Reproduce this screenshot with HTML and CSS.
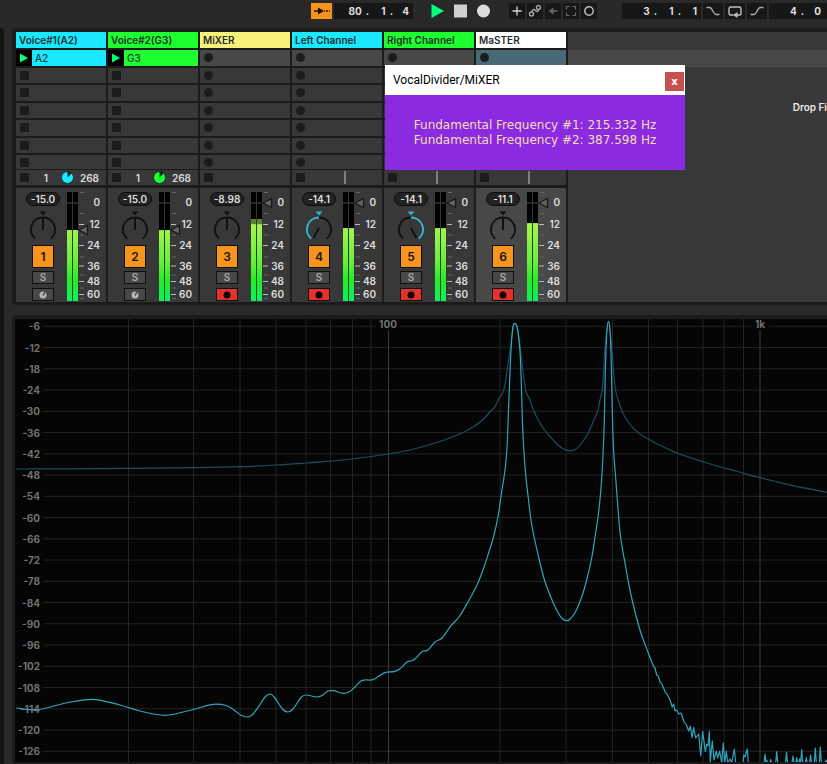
FILE: index.html
```html
<!DOCTYPE html>
<html lang="en">
<head>
<meta charset="utf-8">
<title>VocalDivider</title>
<link rel="stylesheet" href="styles.css">
</head>
<body>
<header class="toolbar">
  <button class="tool follow" aria-label="Follow"><svg width="21" height="16" viewBox="0 0 21 16"><path d="M3 8H8M13 8h6" stroke="#1a1208" stroke-width="1.500" fill="none"/><path d="M14.500 7v2M17.500 7v2" stroke="#f7941e"/><path d="M7 4.500L13 8 7 11.500z" fill="#1a1208"/></svg></button>
  <output class="position" aria-label="Arrangement position"><span><b>80</b><i>.</i></span><span><b>1</b><i>.</i></span><b>4</b></output>
  <div class="transport">
    <button aria-label="Play"><svg width="13" height="16" viewBox="0 0 13 16"><path d="M0.500 1v14L13 8z" fill="#00ff7b"/></svg></button>
    <button aria-label="Stop"><svg width="13" height="16" viewBox="0 0 13 16"><path d="M0 1.500h13v13H0z" fill="#d0d0d0"/></svg></button>
    <button aria-label="Record"><svg width="13" height="16" viewBox="0 0 13 16"><circle cx="6.500" cy="8" r="6.500" fill="#dcdcdc"/></svg></button>
  </div>
  <div class="tools">
    <button class="tool" aria-label="Overdub"><svg width="16" height="16" viewBox="0 0 16 16"><path d="M8 3.500v9M3.500 8h9" stroke="#d6d6d6" stroke-width="1.300"/></svg></button>
    <button class="tool" aria-label="Automation arm"><svg width="16" height="16" viewBox="0 0 16 16"><g fill="none" stroke="#a6a6a6" stroke-width="1.400"><circle cx="4.500" cy="11" r="2"/><circle cx="11.500" cy="4.500" r="2"/><path d="M5 9c0-3 2-3 3.500-1.500S11.500 9 11.500 6.500"/></g></svg></button>
    <button class="tool" aria-label="Re-enable automation"><svg width="16" height="16" viewBox="0 0 16 16"><path d="M7 8h5.500" stroke="#626262" stroke-width="1.600"/><path d="M8.500 4.300v7.400L3.500 8z" fill="#626262"/></svg></button>
    <button class="tool" aria-label="Capture"><svg width="16" height="16" viewBox="0 0 16 16"><path d="M3.500 6.500v-3h3M9.500 3.500h3v3M12.500 9.500v3h-3M6.500 12.500h-3v-3" fill="none" stroke="#666" stroke-width="1.200"/></svg></button>
    <button class="tool" aria-label="Session record"><svg width="16" height="16" viewBox="0 0 16 16"><circle cx="8" cy="8" r="4.200" fill="none" stroke="#bcbcbc" stroke-width="1.500"/></svg></button>
  </div>
  <output class="position" aria-label="Loop start"><span><b>3</b><i>.</i></span><span><b>1</b><i>.</i></span><b>1</b></output>
  <button class="tool wide" aria-label="Punch in"><svg width="20" height="16" viewBox="0 0 20 16"><path d="M3.500 4.500H7c2 0 3.500 7 6 7h3.500" fill="none" stroke="#ababab" stroke-width="1.400"/></svg></button>
  <button class="tool wide" aria-label="Loop"><svg width="20" height="16" viewBox="0 0 20 16"><path d="M8.500 12H5.500Q4 12 4 10.500V6Q4 4 6 4h8q2 0 2 2v4.500Q16 12 14.500 12H10" fill="none" stroke="#c0c0c0" stroke-width="1.400"/><path d="M12.500 9v6L8 12z" fill="#c0c0c0"/></svg></button>
  <button class="tool wide" aria-label="Punch out"><svg width="20" height="16" viewBox="0 0 20 16"><path d="M3.500 11.500H7c2.500 0 4-7 6-7h3.500" fill="none" stroke="#ababab" stroke-width="1.400"/></svg></button>
  <output class="position open" aria-label="Loop length"><span><b>4</b><i>.</i></span><span><b>0</b></span></output>
</header>
<div class="workspace">
  <div class="edge"></div>
  <main class="panels">
    <section class="panel session" aria-label="Session">
      <div class="tracks" id="tracks"></div>
      <div class="drop"><div class="drop-slot"></div><p>Drop Fi</p></div>
      <div class="dialog" role="dialog" aria-label="VocalDivider/MiXER">
        <div class="dialog-bar"><span>VocalDivider/MiXER</span><button aria-label="Close">x</button></div>
        <div class="dialog-body"><p>Fundamental Frequency #1: 215.332 Hz</p><p>Fundamental Frequency #2: 387.598 Hz</p></div>
      </div>
    </section>
    <section class="panel spectrum" aria-label="Spectrum">
      <svg id="plot" viewBox="15 319 812 443" preserveAspectRatio="xMinYMin slice"></svg>
    </section>
  </main>
</div>
<script src="app.js"></script>
</body>
</html>
```
FILE: styles.css
```css
* { box-sizing: border-box; }
body {
  margin: 0;
  min-height: 100vh;
  display: flex;
  flex-direction: column;
  overflow: hidden;
  background: #292929;
  color: #dedede;
  font: 600 10px/12px Inter, "Liberation Sans", sans-serif;
}
button { border: 0; padding: 0; margin: 0; font: inherit; color: inherit; background: none; }
p { margin: 0; }
svg { display: block; }

.toolbar {
  display: flex;
  align-items: flex-start;
  height: 28px;
  padding: 3px 0 0 311px;
  overflow: hidden;
}
.toolbar > * { flex: none; }
.tool { height: 16px; background: #171717; }
.tool.follow { background: #f7941e; margin-right: 2px; }
.tool.wide { margin-left: 2px; }
.position {
  display: flex;
  justify-content: flex-end;
  width: 79px;
  height: 16px;
  padding-right: 4px;
  background: #171717;
  font: 700 10px/16px Inter, "Liberation Sans", sans-serif;
}
.position b { font-weight: 700; }
.position i { font-style: normal; }
.position span { display: flex; justify-content: flex-end; gap: 4px; width: 24px; }
.position > b { width: 16px; text-align: right; }
.toolbar > .position.open { flex: 1; justify-content: flex-start; padding: 0 0 0 11px; }
.position.open span:last-child { width: 17px; }
.transport { display: flex; gap: 10px; margin: 0 19px 0 18px; }
.tools { display: flex; gap: 2px; margin-right: 25px; }
.wide + .position { margin-left: 2px; }

.workspace { flex: 1; display: flex; min-width: 0; }
.edge { width: 4px; background: #151515; border-radius: 0 4px 0 0; }
.panels { flex: 1; min-width: 0; display: flex; flex-direction: column; gap: 10px; padding-left: 8px; }
.panel { background: #1b1b1b; border-radius: 4px 0 0 4px; }

.session { position: relative; display: flex; gap: 2px; padding: 4px 0 3px 4px; }
.tracks { display: grid; grid-template-columns: repeat(6, 90px); gap: 2px; }
.track-name {
  height: 16px;
  padding-left: 3px;
  line-height: 16px;
  color: #1f2d2d;
  white-space: nowrap;
}
.slots {
  display: grid;
  grid-template-rows: repeat(6, 1fr) 14px;
  gap: 2px;
  height: 119px;
  margin: 2px 0 1px;
}
.slot { display: flex; align-items: center; background: #383838; padding-left: 4px; }
.slot.lit { background: #484848; }
.slot.scene { background: #486a76; }
.slot.clip { padding: 0; font-weight: 500; color: #1f3d3d; }
.cyan, .slot.cyan { background: #19e8ff; }
.green, .slot.green { background: #1dff2f; }
.yellow { background: #f8f17a; }
.white { background: #fff; }
.clip-play { display: grid; place-items: center; width: 16px; height: 100%; background: #000; }
.clip-name { padding-left: 3px; }
.stop-row {
  display: flex;
  align-items: center;
  height: 15px;
  padding: 0 7px 0 4px;
  background: #383838;
}
.stop-row .count { width: 20px; text-align: right; margin-right: 13px; }
.stop-row .pie { margin-right: auto; }
.stop-row .cue { width: 2px; height: 13px; margin-left: 40px; background: #909090; }
.stop-row button { width: 8px; }

.strip {
  display: flex;
  height: 114px;
  margin-top: 3px;
  padding-top: 4px;
  background: #383838;
}
.strip.master { background: #484848; }
.controls {
  display: flex;
  flex-direction: column;
  align-items: center;
  width: 34px;
  margin: 0 7px 0 10px;
}
.level {
  width: 34px;
  height: 14px;
  line-height: 12px;
  border: 1px solid #0c0c0c;
  border-radius: 7px;
  background: #222;
  text-align: center;
}
.pan { margin: 4px 0; }
.activator, .solo, .arm { width: 22px; border: 1px solid #101010; }
.activator { height: 23px; background: #f7941e; color: #151515; font-size: 12px; }
.solo { height: 13px; margin: 3px 0 4px; background: #484848; color: #aaa; line-height: 11px; }
.arm { display: grid; place-items: center; height: 13px; background: #484848; }
.arm.armed { background: #e6302b; }
.meter {
  display: grid;
  grid-template-columns: 5px 5px;
  gap: 1px;
  width: 11px;
  height: 109px;
  background: #2d3a24;
}
.channel {
  display: flex;
  flex-direction: column;
  justify-content: flex-end;
  background: linear-gradient(#000 10px, #262626 10px 12px, #000 12px);
}
.hold { background: #5d8230; }
.fill {
  height: calc(var(--level) * 1px);
  background: linear-gradient(to top, #0bf065 0, #20ee25 20px, #6ff03c 42px, #adf653 82px);
  border-top: 1px solid #9ae04c;
}
.scale text { fill: #dedede; text-anchor: end; }

.drop { flex: 1; background: #383838; padding-top: 18px; overflow: hidden; }
.drop-slot { height: 17px; margin-bottom: 34px; background: #484848; }
.drop p { text-align: right; white-space: nowrap; color: #e8e8e8; }

.dialog { position: absolute; left: 373px; top: 37px; width: 300px; }
.dialog-bar {
  display: flex;
  align-items: center;
  justify-content: space-between;
  height: 30px;
  padding: 0 1px 0 8px;
  background: #fff;
  color: #000;
  font: 400 12px/16px Roboto, "Open Sans", sans-serif;
}
.dialog-bar button {
  width: 19px;
  height: 19px;
  margin-top: 3px;
  background: #c75050;
  color: #fff;
  font: 700 10px/16px "DejaVu Sans", sans-serif;
}
.dialog-body {
  height: 75px;
  padding-top: 23px;
  background: #8a2be2;
  color: #f5deb3;
  font: 400 12px/15px "DejaVu Sans", sans-serif;
  text-align: center;
  white-space: nowrap;
}

.spectrum { flex: 1; padding: 4px 0 2px 3px; }
.spectrum svg { width: 100%; height: auto; background: #050505; border-radius: 3px 0 0 0; }
.spectrum text { fill: #707070; font-size: 10px; font-weight: 700; text-anchor: end; }
.spectrum .freq { text-anchor: middle; }
.grid { stroke: #232323; fill: none; }
.grid-major { stroke: #3c3c3c; fill: none; }
.trace { fill: none; stroke: #2fa5bd; stroke-width: 1.2; stroke-linejoin: round; }
.trace-avg { fill: none; stroke: #1c4f5b; stroke-width: 1.2; }
```
FILE: app.js
```js
const tracks = [
  { name: 'Voice#1(A2)', color: 'cyan', clip: 'A2', pie: '#19e8ff', vol: '-15.0', pan: 0, fader: 42, level: 71 },
  { name: 'Voice#2(G3)', color: 'green', clip: 'G3', pie: '#1dff2f', vol: '-15.0', pan: 0, fader: 42, level: 71 },
  { name: 'MiXER', color: 'yellow', vol: '-8.98', pan: 0, fader: 15, level: 77, hold: 5, armed: true },
  { name: 'Left Channel', color: 'cyan', cue: true, vol: '-14.1', pan: -1, fader: 15, level: 73, armed: true },
  { name: 'Right Channel', color: 'green', cue: true, vol: '-14.1', pan: 1, fader: 15, level: 73, armed: true },
  { name: 'MaSTER', color: 'white', cue: true, vol: '-11.1', pan: 0, fader: 15, level: 78, armed: true, master: true }
];
const square = '<svg width="9" height="9"><path d="M0 0h9v9H0z" fill="#1c1c1c"/></svg>';
const dot = '<svg width="9" height="9"><circle cx="4.500" cy="4.500" r="4.500" fill="#1c1c1c"/></svg>';

function slots(t) {
  let out = '';
  for (let i = 0; i < 7; i++) {
    if (i === 0 && t.clip) {
      out += `<div class="slot clip ${t.color}"><button class="clip-play" aria-label="Launch ${t.clip}"><svg width="8" height="10"><path d="M0 .5v9L8 5z" fill="#00ff7b"/></svg></button><span class="clip-name">${t.clip}</span></div>`;
    } else {
      const kind = i === 0 ? (t.master ? ' scene' : ' lit') : '';
      out += `<button class="slot${kind}" aria-label="Slot ${i + 1}">${t.clip ? square : dot}</button>`;
    }
  }
  return out;
}

function stopRow(t) {
  let out = `<button aria-label="Stop clips">${square}</button>`;
  if (t.clip) {
    out += `<span class="count">1</span><svg class="pie" width="13" height="13"><circle cx="6.500" cy="6.500" r="6" fill="${t.pie}" stroke="#15343a" stroke-width="1"/><path d="M6.500 6.500V0A6.500 6.500 0 0 1 11 2z" fill="#0d2426"/></svg><span>268</span>`;
  } else if (t.cue) {
    out += '<span class="cue-cell"><svg width="84" height="13"><path d="M41 0v13" stroke="#999" stroke-width="1.500"/></svg></span>';
  }
  return out;
}

function pan(t) {
  const hot = '#35b4cf', ink = '#111';
  const left = 'M7.200 28.700A12 12 0 0 1 15 7.500';
  const right = 'M15 7.500A12 12 0 0 1 22.800 28.700';
  const needle = t.pan < 0 ? 'M15 18L9.500 28' : t.pan > 0 ? 'M15 18L20.500 28' : 'M15 7v13';
  return `<svg class="pan" width="30" height="31" viewBox="0 0 30 31" role="img" aria-label="Pan">
    <path d="M11.500 1.500h7L15 5.500z" fill="${t.pan ? hot : ink}"/>
    <g fill="none" stroke-width="2"><path d="${left}" stroke="${t.pan < 0 ? hot : ink}"/><path d="${right}" stroke="${t.pan > 0 ? hot : ink}"/><path d="${needle}" stroke="${ink}"/></g></svg>`;
}

function scale(t) {
  const labels = [[0, 10.5], [12, 32.5], [24, 53.5], [36, 74], [48, 89.5], [60, 102.5]];
  const minor = [0.5, 21.5, 43, 65, 83, 96, 106.5];
  let out = '<svg class="scale" width="24" height="110" viewBox="0 0 24 110">';
  minor.forEach(y => { out += `<path d="M2 ${y}h4" stroke="#666"/>`; });
  labels.forEach(([v, y]) => {
    if (v) out += `<path d="M1 ${y}h5" stroke="#bbb"/>`;
    out += `<text x="22" y="${y + 3.5}">${v}</text>`;
  });
  const y = t.fader - 4;
  return out + `<path d="M1 ${y}L9.500 ${y - 4.5}v9z" fill="#646464" stroke="#181818" stroke-width="1.300"/></svg>`;
}

document.getElementById('tracks').innerHTML = tracks.map((t, i) => {
  const channel = `<div class="channel">${t.hold ? `<div class="hold" style="height:${t.hold}px"></div>` : ''}<div class="fill" style="--level:${t.level}"></div></div>`;
  const arm = t.armed
    ? '<svg width="8" height="8"><circle cx="4" cy="4" r="3.500" fill="#0b0b0b"/></svg>'
    : '<svg width="8" height="8"><circle cx="4" cy="4" r="3.500" fill="#b5b5b5"/><path d="M4 4.500L6 1" stroke="#444" stroke-width="1.500"/></svg>';
  return `<article>
    <div class="track-name ${t.color}">${t.name}</div>
    <div class="slots">${slots(t)}</div>
    <div class="stop-row">${stopRow(t)}</div>
    <div class="strip${t.master ? ' master' : ''}">
      <div class="controls"><output class="level">${t.vol}</output>${pan(t)}
        <button class="activator">${i + 1}</button><button class="solo">S</button>
        <button class="arm${t.armed ? ' armed' : ''}" aria-label="Arm">${arm}</button></div>
      <div class="meter">${channel}${channel}</div>${scale(t)}
    </div></article>`;
}).join('');

// Smooth curve through a list of x,y pairs with x increasing: the slope at
// each point is taken from its neighbours, and is level at peaks and dips.
function spline(text) {
  const n = text.trim().split(/[\s,]+/).map(Number), p = [];
  for (let i = 0; i < n.length; i += 2) p.push([n[i], n[i + 1]]);
  const m = p.map((q, i) => {
    const a = p[i - 1] || q, c = p[i + 1] || q;
    if (a !== q && c !== q && (q[1] - a[1]) * (c[1] - q[1]) <= 0) return 0;
    return (c[1] - a[1]) / (c[0] - a[0]);
  });
  let d = `M${p[0]}`;
  for (let i = 0; i < p.length - 1; i++) {
    const b = p[i], c = p[i + 1], h = (c[0] - b[0]) / 3;
    d += `C${b[0] + h},${b[1] + m[i] * h} ${c[0] - h},${c[1] - m[i + 1] * h} ${c}`;
  }
  return d;
}

const average = spline(`16,469 70,468.8 128,468.4 193,467.7 240,466.7 276,465 306,463 330,461.2 352,459 388,454 410,450 440,441.5 462,433 475,425.7 485,417.7 490,411.5 494.7,407 499,398.3 503,392 505.3,383 507,370 510,352 513,328 514.7,323.5 517,326 519,337 521,355 523,372 526,391.7 530,400 533.7,411 541,424.7 550,436.7 558,445 564,449.3 570.5,450.8 576,449 582,442.5 588,433.5 594,420 598,410 600,400 602,391.7 603.5,375 604.5,355 606.5,332 608.3,321.5 610,330 612,350 613.7,373 615.7,391 620,405.7 625,417 632.5,427.3 640,434 648.5,439 660,445.3 677,453 703,461.7 727,468.7 743,473 760,477.7 793,485.7 827,492.3`);
const current = spline(`16,708 31,709.7 42,709 68,702.5 92,699.3 120,705 140,711 165,715.3 193,709.5 216,704.2 226,705.5 234,710 241,715.3 247,717 252,715 259,706 265,697 270,694 275,698 282,708.5 287.7,712 293,709 301,697.5 306,695 317,697 322,695.5 328,691 333,690.6 343,693.3 349,692 355,687 361,681 365,680 373,679.7 379,676 385,672.7 395,671.3 400,668.7 407,662 412,660.7 416,658 422,651.7 428,650 435,642 442,638 451,625.7 459,617 468,602 477,585 483.7,568 489,551.7 494,535 498.3,515 501.7,491.7 505,470 507,448 508.7,405 510,371.7 511.3,345 513,326.7 514.7,323.3 516.7,325.7 518.3,335 520,351.7 521.3,381.7 522.3,418 523.7,448 525.7,475 528.3,498 530.7,518 533.7,535 540,563 545,581.7 553.3,603 557.7,612 561.7,618 566.7,620.7 569.3,619.7 575,612.7 581.7,597 586.7,580 591.7,558 595.3,535 598.3,515 601,488 603,455 604.3,421.7 605.3,371.7 606.7,335 608.3,321.3 610,330 611.3,365 612.3,411.7 613.7,451.7 615.7,478 617.7,505 620.3,535 625,563 631,595 640,630 648.3,653 653.3,666`)
  + 'L655 668L656.700 675L658.300 676L660 682L661.700 683.700L665.700 693L667 694L670 700L672.300 707L673.700 704L675 711L676.700 710L678.700 714L681 713L684 721.700L686.500 725L688.700 731L690.300 726L692 737.700L693.700 727.700L695.700 738L698.700 734L700.700 755.700L702.700 731.700L705.300 751.700L706.700 744L708 746L709.300 731.700L710.300 762L712.300 741L714 760L716.300 751L717.700 758L719.700 751L721.700 763L723.300 743L724.700 763L726.300 751L727.700 763L730 759L731.700 763L734.300 749L735.700 763M743 763L743.700 755L745 757L747.300 749L748.300 763';
let spikes = '';
[[765, 754], [766.7, 760], [770.7, 759.5], [776.7, 751.5], [786.5, 752], [793, 756], [796.7, 757.5], [799.7, 759], [801.7, 749.5], [806.3, 757.5], [810.5, 755], [815.3, 748], [820.3, 747], [826, 760]]
  .forEach(([x, y]) => { spikes += `M${x - 1} 763L${x} ${y}L${x + 1} 763`; });

let marks = '', grid = '', major = '';
for (let i = 0; i < 21; i++) {
  const y = 326.3 + i * 21.25;
  grid += i ? `M43 ${y}H827` : `M43 ${y}H376M400 ${y}H751M769 ${y}H827`;
  marks += `<text x="40" y="${y + 4}">-${6 * (i + 1)}</text>`;
}
[128.5, 193.5, 240, 276, 306, 330.5, 352.5, 371, 500, 566, 612.5, 648.5, 677.5, 703, 724, 743.5].forEach(x => { grid += `M${x} 319V762`; });
[388.5, 760].forEach(x => { major += `M${x} 330V762`; });
document.getElementById('plot').innerHTML =
  `<path class="grid" d="${grid}"/><path class="grid-major" d="${major}"/>${marks}
   <text class="freq" x="388" y="328">100</text><text class="freq" x="760" y="328">1k</text>
   <path class="trace-avg" d="${average}"/><path class="trace" d="${current}"/><path class="trace" d="${spikes}"/>`;
```
